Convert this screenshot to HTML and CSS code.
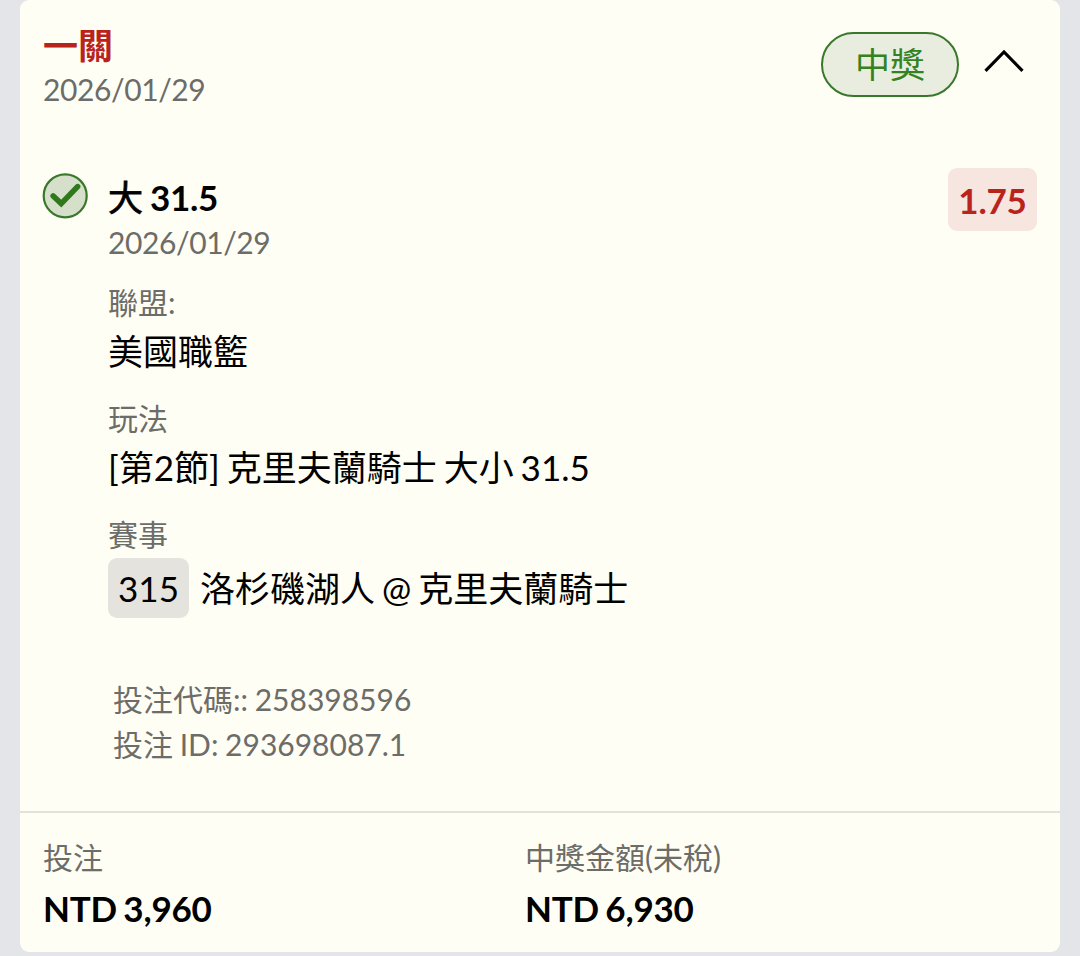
FILE: index.html
```
<!DOCTYPE html>
<html lang="zh-Hant">
<head>
    <meta charset="UTF-8">
    <meta name="viewport" content="width=device-width, initial-scale=1.0">
    <title>投注</title>
    <link rel="stylesheet" href="styles.css">
</head>
<body>
    <div class="card">
        <!-- Ticket header -->
        <div class="card-header">
            <div class="header-info">
                <h2>一關</h2>
                <div class="date">2026/01/29</div>
            </div>
            <span class="status">中獎</span>
            <svg class="chevron" width="42" height="26" viewBox="0 0 42 26">
                <path d="M2.5 22.8 L21 4 L39.5 22.8" fill="none" stroke="#000" stroke-width="3.2"/>
            </svg>
        </div>

        <!-- Selection -->
        <div class="selection">
            <svg class="check" width="46" height="46" viewBox="0 0 46 46">
                <circle cx="23.2" cy="22.8" r="21.5" fill="#d5dfca" stroke="#38782a" stroke-width="2.2"/>
                <path d="M11.2 23 L19.2 30.6 L35.6 13.6" fill="none" stroke="#2f781c" stroke-width="5.6" stroke-linecap="round"/>
            </svg>
            <div class="details">
                <div class="pick"><span class="side">大</span> 31.5</div>
                <div class="date">2026/01/29</div>
                <div class="field">
                    <div class="label">聯盟:</div>
                    <div class="value">美國職籃</div>
                </div>
                <div class="field">
                    <div class="label">玩法</div>
                    <div class="value">[第2節] 克里夫蘭騎士 大小 31.5</div>
                </div>
                <div class="field">
                    <div class="label">賽事</div>
                    <div class="match"><span class="match-no">315</span>洛杉磯湖人 @ 克里夫蘭騎士</div>
                </div>
                <div class="codes">
                    <div>投注代碼:: 258398596</div>
                    <div>投注 ID: 293698087.1</div>
                </div>
            </div>
            <span class="odds">1.75</span>
        </div>

        <!-- Stake and payout -->
        <div class="card-footer">
            <div>
                <div class="label">投注</div>
                <div class="amount">NTD 3,960</div>
            </div>
            <div>
                <div class="label">中獎金額(未稅)</div>
                <div class="amount">NTD 6,930</div>
            </div>
        </div>
    </div>
</body>
</html>
```
FILE: styles.css
```
* {
    box-sizing: border-box;
}
body {
    font-family: Lato, "Noto Sans CJK TC", sans-serif;
    font-size: 35px;
    word-spacing: -2px;
    color: #000;
    background-color: #e4e5e9;
    margin: 0;
    padding: 0 20px;
    height: 956px;
    overflow: hidden;
}
.card {
    height: 952px;
    background-color: #fffef5;
    border-radius: 9px;
    display: flex;
    flex-direction: column;
}
.card-header {
    display: flex;
    align-items: flex-start;
    height: 168px;
    padding: 22px 35px 0 23px;
}
.header-info {
    flex: 1;
}
h2 {
    margin: 0;
    font-size: 35px;
    height: 45px;
    line-height: 46px;
    font-weight: bold;
    color: #b8241b;
}
.date, .label, .codes {
    font-size: 30px;
    line-height: 44px;
    color: #6c6c68;
}
.date {
    letter-spacing: -0.4px;
}
.status {
    width: 138px;
    height: 65px;
    margin-top: 10px;
    border: 2px solid #38782a;
    border-radius: 33px;
    background-color: #e9eddf;
    color: #348222;
    line-height: 60px;
    text-align: center;
}
.chevron {
    margin: 26px 0 0 24px;
}
.selection {
    display: flex;
    align-items: flex-start;
    flex: 1;
    padding: 0 23px 0 22px;
}
.check {
    margin: 5px 20px 0 0;
}
.details {
    flex: 1;
    padding-top: 6px;
}
.pick {
    font-weight: bold;
    line-height: 46px;
    letter-spacing: -0.3px;
    word-spacing: -1px;
}
.side {
    font-weight: normal;
    -webkit-text-stroke: 0.8px #000;
}
.field {
    margin-top: 20px;
}
.date + .field {
    margin-top: 16px;
}
.label {
    height: 46px;
}
.value {
    line-height: 50px;
}
.field .label {
    line-height: 45px;
}
.match {
    display: flex;
    align-items: center;
    line-height: 59px;
}
.match-no {
    width: 81px;
    height: 60px;
    margin-right: 11px;
    border-radius: 9px;
    background-color: #e5e3de;
    line-height: 61px;
    text-align: center;
}
.codes {
    padding: 59px 0 0 5px;
    line-height: 45px;
    word-spacing: -1px;
}
.odds {
    width: 89px;
    height: 63px;
    border-radius: 9px;
    background-color: #f6e6df;
    color: #b8241b;
    font-weight: bold;
    line-height: 64px;
    text-align: center;
    letter-spacing: -0.2px;
}
.card-footer {
    display: grid;
    grid-template-columns: 482px 1fr;
    height: 141px;
    padding: 22px 23px 0;
    border-top: 2px solid #e4e2dd;
}
.amount {
    font-weight: bold;
    line-height: 54px;
    letter-spacing: -0.2px;
}
```
